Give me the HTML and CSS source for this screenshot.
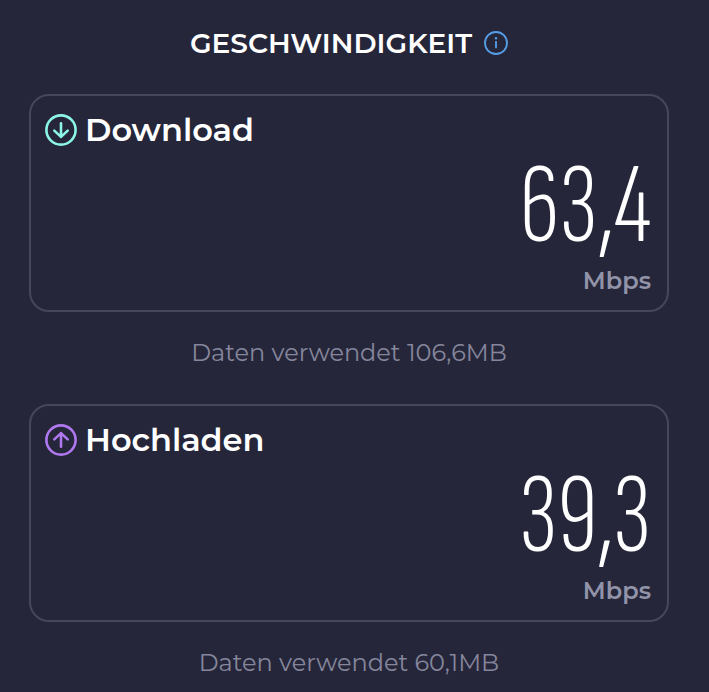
FILE: index.html
```html
<!DOCTYPE html>
<html lang="de">
<head>
    <meta charset="UTF-8">
    <meta name="viewport" content="width=device-width, initial-scale=1.0">
    <title>Geschwindigkeit</title>
    <link rel="stylesheet" href="styles.css">
</head>
<body>

    <main class="speed">
        <header class="speed-header">
            <h1>GESCHWINDIGKEIT</h1>
            <button class="info" type="button" aria-label="Info">
                <svg viewBox="0 0 24 24" width="24" height="24" fill="none" stroke="currentColor" stroke-width="1.8">
                    <circle cx="12" cy="12" r="11"/>
                    <path d="M12 10v7.2"/>
                    <circle cx="12" cy="7.2" r="1.2" fill="currentColor" stroke="none"/>
                </svg>
            </button>
        </header>

        <section class="card">
            <h2 class="card-title">
                <svg class="download" viewBox="0 0 32 32" width="32" height="32" fill="none" stroke="currentColor" stroke-width="2.6" stroke-linecap="round" stroke-linejoin="round">
                    <circle cx="16" cy="16" r="14.6"/>
                    <path d="M16 9.3v13.6M9.3 16.6l6.7 6.3 6.7-6.3"/>
                </svg>
                Download
            </h2>
            <p class="value">63,4</p>
            <p class="unit">Mbps</p>
        </section>
        <p class="used">Daten verwendet 106,6MB</p>

        <section class="card">
            <h2 class="card-title">
                <svg class="upload" viewBox="0 0 32 32" width="32" height="32" fill="none" stroke="currentColor" stroke-width="2.6" stroke-linecap="round" stroke-linejoin="round">
                    <circle cx="16" cy="16" r="14.6"/>
                    <path d="M16 22.7V9.1M9.3 15.4L16 9.1l6.7 6.3"/>
                </svg>
                Hochladen
            </h2>
            <p class="value">39,3</p>
            <p class="unit">Mbps</p>
        </section>
        <p class="used">Daten verwendet 60,1MB</p>
    </main>

</body>
</html>
```

FILE: styles.css
```css
* {
    box-sizing: border-box;
}

body {
    margin: 0;
    background-color: #25263a;
    color: #fff;
    font-family: 'Montserrat', 'Inter', sans-serif;
}

h1, h2, p {
    margin: 0;
}

.speed {
    padding: 24px 40px 0 29px;
}

.speed-header {
    display: flex;
    justify-content: center;
    align-items: center;
    gap: 12px;
    height: 38px;
    margin-bottom: 32px;
}

.speed-header h1 {
    font-size: 28px;
    font-weight: 600;
}

.info {
    display: flex;
    padding: 0;
    border: none;
    background: none;
    color: #569ee6;
    cursor: pointer;
}

.card {
    padding: 14px 16px 12px 14px;
    border: 2px solid #46475a;
    border-radius: 20px;
}

.card-title {
    display: flex;
    align-items: center;
    gap: 8px;
    font-size: 32px;
    font-weight: 600;
    line-height: 40px;
}

.download {
    color: #8cf5e6;
}

.upload {
    color: #af78ee;
}

.value {
    font-family: 'Sofia Sans Extra Condensed', 'Barlow Condensed', 'Roboto', sans-serif;
    font-size: 114px;
    font-weight: 360;
    line-height: 114px;
    text-align: right;
}

.unit {
    color: #9193a8;
    font-size: 24px;
    font-weight: 600;
    line-height: 34px;
    text-align: right;
}

.used {
    height: 92px;
    color: #85869c;
    font-size: 24px;
    line-height: 82px;
    text-align: center;
}
```
